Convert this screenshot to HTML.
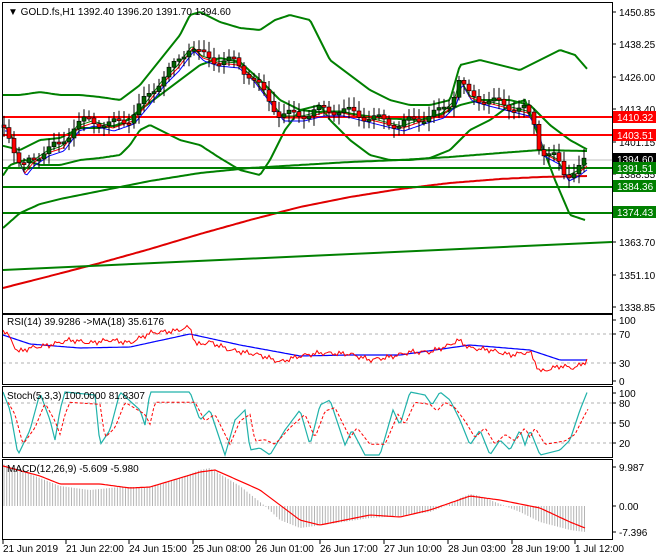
<!DOCTYPE html><html><head><meta charset="utf-8"><style>
body{margin:0;background:#fff;width:660px;height:560px;overflow:hidden;font-family:"Liberation Sans",sans-serif}
svg{display:block}
text{font-family:"Liberation Sans",sans-serif;font-size:10px;fill:#000}
</style></head><body>
<svg id="s" width="660" height="560" xmlns="http://www.w3.org/2000/svg">
<rect width="660" height="560" fill="#fff"/>
<g id="g"></g>
<rect x="2.5" y="2.5" width="610" height="311" fill="none" stroke="#000"/>
<rect x="2.5" y="314.5" width="610" height="70" fill="none" stroke="#000"/>
<rect x="2.5" y="386.5" width="610" height="71" fill="none" stroke="#000"/>
<rect x="2.5" y="459.5" width="610" height="80" fill="none" stroke="#000"/>
<g id="t"></g>
<text x="8" y="15">▼ GOLD.fs,H1  1392.40 1396.20 1391.70 1394.60</text>
<text x="7" y="325">RSI(14) 39.9286  -&gt;MA(18) 35.6176</text>
<text x="7" y="399">Stoch(5,3,3) 100.0000 81.8307</text>
<text x="7" y="472">MACD(12,26,9) -5.609 -5.980</text>
</svg>
<script>
var g=document.getElementById('g'),t=document.getElementById('t'),NS='http://www.w3.org/2000/svg';
function el(p,n,a,txt){var e=document.createElementNS(NS,n);for(var k in a)e.setAttribute(k,a[k]);if(txt!=null)e.textContent=txt;p.appendChild(e);return e}
function interp(pts,x){if(x<=pts[0][0])return pts[0][1];for(var i=0;i<pts.length-1;i++){if(x<=pts[i+1][0]){var a=pts[i],b=pts[i+1],f=(x-a[0])/(b[0]-a[0]);return a[1]+(b[1]-a[1])*f}}return pts[pts.length-1][1]}
function curve(pts,x0,x1,col,w,dash,rnd){var d='';for(var x=x0;x<=x1;x+=2){var y=interp(pts,x);if(rnd){y+=Math.sin(x*1.7)*rnd+Math.sin(x*0.53)*rnd}d+=(d?'L':'M')+x+' '+y.toFixed(1)}el(g,'path',{d:d,fill:'none',stroke:col,'stroke-width':w,'stroke-dasharray':dash||'none'})}
function hl(y,col,w,x0,dash){el(g,'line',{x1:x0||3,x2:612,y1:y,y2:y,stroke:col,'stroke-width':w,'stroke-dasharray':dash||'none'})}
hl(160,'#c0c0c0',1);
var up=[[0,95],[20,95],[40,92],[60,95],[80,95],[100,97],[120,100],[140,85],[160,60],[180,35],[190,15],[200,12],[220,22],[240,28],[260,30],[275,20],[290,15],[310,20],[330,60],[350,75],[370,90],[390,100],[410,105],[430,105],[450,100],[460,65],[480,60],[500,65],[520,70],[540,60],[560,50],[575,55],[588,70]];
var lo=[[0,180],[10,165],[25,160],[40,165],[60,165],[80,160],[100,158],[120,155],[130,145],[140,130],[150,125],[160,130],[180,140],[200,145],[220,158],[240,170],[260,175],[270,160],[285,130],[300,110],[320,105],[330,120],[350,140],[370,155],[390,160],[410,160],[430,158],[450,150],[470,130],[490,120],[510,105],[525,100],[540,140],[555,180],[570,215],[585,220]];
var mid=[[0,145],[20,150],[40,140],[60,138],[80,128],[100,128],[120,125],[140,110],[160,95],[180,80],[200,65],[220,58],[240,62],[260,80],[280,100],[300,110],[320,112],[340,112],[380,118],[420,120],[440,115],[460,105],[480,100],[510,100],[530,105],[550,125],[570,140],[588,150]];
var lng=[[3,228],[20,213],[40,204],[60,199],[100,191],[150,181],[200,173],[250,168],[300,165],[350,162],[400,160],[450,157],[500,153],[540,150],[585,151]];
var pr=[[3,125],[10,135],[17,160],[22,170],[30,160],[45,150],[60,145],[75,125],[90,120],[110,125],[130,118],[145,100],[160,80],[175,65],[190,45],[200,55],[215,60],[235,62],[250,75],[265,95],[280,115],[300,115],[320,110],[340,110],[360,115],[380,120],[400,125],[420,118],[440,112],[452,100],[458,78],[468,95],[485,100],[505,105],[525,110],[535,125],[540,150],[555,158],[565,175],[575,170],[588,160]];
curve(up,3,588,'#008000',2);curve(lo,3,585,'#008000',2);curve(mid,3,588,'#008000',2);
curve(lng,3,588,'#008000',2);
var ma200=[[3,288],[50,276],[100,263],[150,249],[200,234],[250,220],[300,207],[350,197],[400,189],[450,183],[500,179],[540,177],[588,176]];
curve(ma200,3,588,'#e00000',2);
el(g,'line',{x1:3,y1:270,x2:612,y2:242,stroke:'#008000','stroke-width':2});
hl(117,'#ff0000',2);hl(135,'#ff0000',2);hl(168,'#008000',2);hl(187,'#008000',2);hl(213,'#008000',2);
var sm=function(o,s){return pr.map(function(p){return [p[0]+s,p[1]+o]})};
curve(sm(6,4),5,588,'#0000ff',1);
curve(sm(3,3),5,588,'#ff0000',1);
curve(sm(1,2),5,588,'#008000',1);
var prev=interp(pr,3);
for(var x=4;x<=588;x+=5){var c=interp(pr,x)+Math.sin(x*2.3)*5;var o=prev;prev=c;var hi=Math.min(o,c)-3-Math.abs(Math.sin(x*1.3))*7,lw=Math.max(o,c)+3+Math.abs(Math.cos(x*0.9))*7;
el(g,'line',{x1:x,x2:x,y1:hi,y2:lw,stroke:'#000','stroke-width':1});
var b=Math.min(o,c),h=Math.max(2,Math.abs(o-c));
el(g,'rect',{x:x-2,y:b,width:4,height:h,fill:c<o?'#006400':'#ff0000',stroke:'#000','stroke-width':0.6});}
[334,363].forEach(function(y){hl(y,'#b0b0b0',1,3,'3,3')});
var rsi=[[3,330],[8,335],[18,352],[30,348],[50,345],[70,340],[90,343],[110,340],[130,343],[150,333],[175,331],[190,327],[196,345],[210,342],[230,350],[260,355],[280,362],[300,356],[320,353],[350,354],[370,360],[390,357],[410,352],[430,352],[450,345],[458,340],[470,348],[490,350],[510,355],[530,352],[540,372],[560,366],[575,368],[588,360]];
var rma=[[3,335],[30,344],[80,348],[130,347],[190,334],[240,345],[300,356],[350,355],[400,355],[470,345],[530,350],[560,360],[588,360]];
curve(rma,3,588,'#0000ff',1.2);curve(rsi,3,588,'#ff0000',1,null,1.5);
[403,423,443].forEach(function(y){hl(y,'#b0b0b0',1,3,'3,3')});
var st=[[3,392],[10,410],[18,455],[30,430],[40,393],[50,420],[55,440],[60,410],[65,392],[95,395],[100,445],[110,430],[120,392],[140,410],[145,425],[150,392],[190,392],[200,420],[210,410],[225,455],[235,420],[245,410],[250,450],[260,448],[270,455],[285,430],[300,410],[310,445],[320,405],[330,400],[345,445],[352,430],[365,455],[380,455],[393,410],[400,425],[410,392],[425,395],[432,405],[440,392],[450,400],[460,420],[470,445],[480,430],[490,455],[500,440],[510,450],[520,430],[525,445],[530,430],[540,455],[560,450],[570,440],[580,410],[588,390]];
curve(st,3,588,'#20b2aa',1.2);
curve(st.map(function(p){return [p[0]+5,(p[1]*2+423)/3]}),8,588,'#ff0000',1,'3,2');
var mc=[[3,466],[40,476],[60,484],[100,484],[130,488],[150,487],[200,472],[215,470],[260,490],[300,520],[320,525],[370,515],[400,517],[430,510],[470,496],[500,500],[540,508],[570,522],[585,528]];
var hb=[[3,464],[20,470],[40,478],[60,486],[90,490],[120,487],[150,487],[180,478],[200,470],[210,468],[240,486],[265,506],[280,520],[300,528],[330,524],[370,518],[400,516],[430,512],[450,504],[460,498],[470,494],[480,496],[500,504],[520,512],[540,522],[570,530],[585,532]];
for(var x=4;x<=585;x+=2.7){var v=interp(hb,x);el(g,'line',{x1:x.toFixed(1),x2:x.toFixed(1),y1:506,y2:v,stroke:'#b4b4b4','stroke-width':1});}
curve(mc,3,585,'#ff0000',1.2);
var al=[[12,'1450.85'],[44,'1438.25'],[77,'1426.00'],[109,'1413.40'],[142,'1401.15'],[174,'1388.55'],[242,'1363.70'],[275,'1351.10'],[307,'1338.85'],[320,'100'],[334,'70'],[363,'30'],[381,'0'],[393,'100'],[403,'80'],[423,'50'],[443,'20'],[467,'9.987'],[506,'0.00'],[532,'-7.396']];
al.forEach(function(a){el(t,'line',{x1:612,x2:616,y1:a[0],y2:a[0],stroke:'#000'});el(t,'text',{x:619,y:a[0]+4},a[1])});
var bx=[[117,'#ff0000','1410.32'],[135,'#ff0000','1403.51'],[159,'#000','1394.60'],[168,'#008000','1391.51'],[186,'#008000','1384.36'],[212,'#008000','1374.43']];
bx.forEach(function(b){el(t,'rect',{x:613,y:b[0]-6,width:43,height:12,fill:b[1]});el(t,'text',{x:617,y:b[0]+4,style:'fill:#fff'},b[2])});
var dl=[[3,'21 Jun 2019'],[66,'21 Jun 22:00'],[129,'24 Jun 15:00'],[193,'25 Jun 08:00'],[256,'26 Jun 01:00'],[320,'26 Jun 17:00'],[384,'27 Jun 10:00'],[448,'28 Jun 03:00'],[512,'28 Jun 19:00'],[575,'1 Jul 12:00']];
dl.forEach(function(d){el(t,'line',{x1:d[0],x2:d[0],y1:540,y2:544,stroke:'#000'});el(t,'text',{x:d[0],y:552},d[1])});
</script>
</body></html>
